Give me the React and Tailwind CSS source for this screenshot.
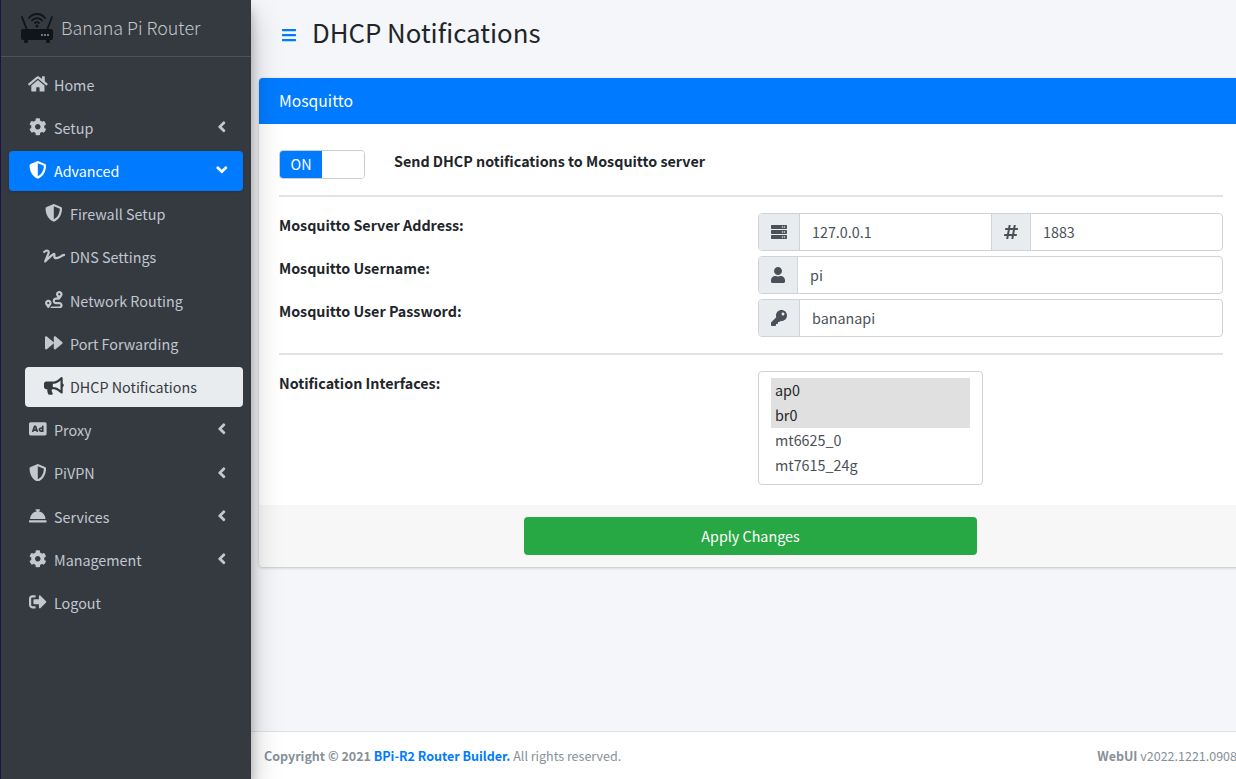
import React from "react";
import { FaHome, FaCog, FaShieldAlt, FaAngleLeft, FaAngleDown, FaSignature, FaRoute, FaForward, FaBullhorn, FaAd, FaConciergeBell, FaSignOutAlt, FaServer, FaHashtag, FaUser, FaKey, FaBars } from "react-icons/fa";

const Logo = () => (
  <svg width="34" height="31" viewBox="0 0 34 31" className="shrink-0">
    <g fill="none" stroke="#111418" strokeWidth="1.8" strokeLinecap="round">
      <path d="M9 5 A10 10 0 0 1 25 5" />
      <path d="M12 7.500 A6.400 6.400 0 0 1 22 7.500" />
      <path d="M15 10 A3 3 0 0 1 19 10" />
      <path d="M2 4 L7 17" />
      <path d="M32 4 L27 17" />
    </g>
    <circle cx="17" cy="13" r="1.500" fill="#111418" />
    <rect x="1" y="16" width="32" height="11" rx="2" fill="#111418" />
    <rect x="4" y="27" width="4" height="3" rx="1" fill="#111418" />
    <rect x="26" y="27" width="4" height="3" rx="1" fill="#111418" />
    <rect x="21" y="21" width="2" height="2" fill="#6c757d" />
    <rect x="24" y="21" width="2" height="2" fill="#6c757d" />
    <rect x="27" y="21" width="2" height="2" fill="#6c757d" />
  </svg>
);

const items = [
  { t: "Home", I: FaHome, s: 19.8 },
  { t: "Setup", I: FaCog, arrow: true },
  { t: "Advanced", I: FaShieldAlt, active: true, down: true },
  { t: "Firewall Setup", I: FaShieldAlt, sub: true },
  { t: "DNS Settings", I: FaSignature, sub: true, s: 22 },
  { t: "Network Routing", I: FaRoute, sub: true },
  { t: "Port Forwarding", I: FaForward, sub: true },
  { t: "DHCP Notifications", I: FaBullhorn, sub: true, current: true, s: 19.8 },
  { t: "Proxy", I: FaAd, arrow: true },
  { t: "PiVPN", I: FaShieldAlt, arrow: true },
  { t: "Services", I: FaConciergeBell, arrow: true },
  { t: "Management", I: FaCog, arrow: true },
  { t: "Logout", I: FaSignOutAlt },
];

function NavItem({ t, I, s = 17.6, arrow, down, active, sub, current }) {
  const color = active ? "bg-[#007bff] text-white shadow-sm" : current ? "bg-[#e9ecef] text-[#343a40]" : "text-[#c2c7d0]";
  const pos = sub ? "ml-[24px] pl-[17px]" : "ml-[8px] pl-[17px]";
  return (
    <div className={`mb-[3.2px] mr-[8px] flex h-10 items-center rounded pr-[12px] ${pos} ${color}`}>
      <span className="mr-[4px] flex w-[24px] shrink-0 -translate-y-[1px] justify-center">
        <I size={s} />
      </span>
      <span className="text-[14.33px] leading-6">{t}</span>
      {arrow && <FaAngleLeft size={17.6} className="ml-auto -translate-y-[1px]" />}
      {down && <FaAngleDown size={17.6} className="ml-auto -translate-y-[1px]" />}
    </div>
  );
}

function Addon({ I, w, s = 16 }) {
  return (
    <span className={`flex shrink-0 items-center justify-center self-stretch bg-[#e9ecef] text-[#495057] ${w}`}>
      <I size={s} />
    </span>
  );
}

const Val = ({ children, cls = "" }) => (
  <span className={`flex flex-1 items-center text-[14.33px] text-[#495057] ${cls}`}>{children}</span>
);

const Opt = ({ children, on }) => (
  <div className={`h-[25px] pl-[4px] ${on ? "bg-[#e0e0e0] text-[#212529]" : ""}`}>
    <span className="block -translate-y-[1px]">{children}</span>
  </div>
);

export default function App() {
  return (
    <div
      className="flex h-[779px] w-[1236px] overflow-hidden bg-[#f4f6f9] text-[#212529]"
      style={{ fontFamily: '"Noto Sans CJK JP", "Noto Sans", sans-serif' }}
    >
      <aside className="relative z-10 flex w-[251px] shrink-0 flex-col border-l border-[#1a1446] bg-[#343a40] shadow-[0_14px_28px_rgba(0,0,0,0.25),0_10px_10px_rgba(0,0,0,0.22)]">
        <div className="flex h-[57px] items-center border-b border-[#4b545c] pl-[19px]">
          <Logo />
          <span className="ml-[7px] text-[17.9px] font-light leading-none text-[rgba(255,255,255,0.72)]">Banana Pi Router</span>
        </div>
        <nav className="pt-[7.7px]">
          {items.map((it) => (
            <NavItem key={it.t} {...it} />
          ))}
        </nav>
      </aside>

      <main className="flex min-w-0 flex-1 flex-col">
        <div className="flex h-[78px] shrink-0 items-start pl-[30px] pt-[13px]">
          <FaBars size={16} className="mt-[14px] text-[#007bff]" />
          <h1 className="ml-[15px] whitespace-nowrap text-[25.8px] font-normal leading-[38px]">DHCP Notifications</h1>
        </div>

        <div className="ml-[8px] w-[984px] shrink-0 overflow-hidden rounded bg-white shadow-[0_0_1px_rgba(0,0,0,0.125),0_1px_3px_rgba(0,0,0,0.2)]">
          <div className="flex h-[46px] items-center bg-[#007bff] px-5 text-[15.7px] text-white">Mosquitto</div>

          <div className="px-5 pt-[26px]">
            <div className="flex h-[29px] items-center">
              <div className="flex h-[29px] w-[86px] overflow-hidden rounded border border-[#ccc]">
                <span className="flex w-[42px] items-center justify-center bg-[#007bff] text-[14.33px] text-white">
                  <span className="-translate-y-[1px]">ON</span>
                </span>
                <span className="flex-1 bg-white" />
              </div>
              <span className="ml-[29px] -translate-y-[4px] text-[14.3px] font-bold">Send DHCP notifications to Mosquitto server</span>
            </div>

            <hr className="mt-[16px] border-t-2 border-[#e3e3e3]" />

            <div className="mt-[16px] flex flex-col gap-[5px]">
              <div className="flex items-start justify-between">
                <span className="text-[14.3px] font-bold leading-6">Mosquitto Server Address:</span>
                <div className="flex h-[38px] w-[465px] overflow-hidden rounded border border-[#ced4da]">
                  <Addon I={FaServer} w="w-[41px] border-r border-[#ced4da]" />
                  <Val cls="pl-[12px] w-[191px] flex-none">127.0.0.1</Val>
                  <Addon I={FaHashtag} w="w-[40px] border-x border-[#ced4da]" />
                  <Val cls="pl-[12px]">1883</Val>
                </div>
              </div>
              <div className="flex items-start justify-between">
                <span className="text-[14.3px] font-bold leading-6">Mosquitto Username:</span>
                <div className="flex h-[38px] w-[465px] overflow-hidden rounded border border-[#ced4da]">
                  <Addon I={FaUser} w="w-[39px] border-r border-[#ced4da]" />
                  <Val cls="pl-[12px]">pi</Val>
                </div>
              </div>
              <div className="flex items-start justify-between">
                <span className="text-[14.3px] font-bold leading-6">Mosquitto User Password:</span>
                <div className="flex h-[38px] w-[465px] overflow-hidden rounded border border-[#ced4da]">
                  <Addon I={FaKey} w="w-[41px] border-r border-[#ced4da]" />
                  <Val cls="pl-[12px]">bananapi</Val>
                </div>
              </div>
            </div>

            <hr className="mt-[16px] border-t-2 border-[#e3e3e3]" />

            <div className="mt-[16px] flex items-start justify-between pb-[20px]">
              <span className="text-[14.3px] font-bold leading-6">Notification Interfaces:</span>
              <div className="w-[465px]">
                <div className="h-[114px] w-[225px] rounded border border-[#ced4da] px-[12px] pt-[6px] text-[14.33px] leading-[25px] text-[#495057]">
                  <Opt on>ap0</Opt>
                  <Opt on>br0</Opt>
                  <Opt>mt6625_0</Opt>
                  <Opt>mt7615_24g</Opt>
                </div>
              </div>
            </div>
          </div>

          <div className="flex h-[62px] items-center justify-center bg-[#f7f7f7] pr-[1px]">
            <div className="flex h-[38px] w-[453px] items-center justify-center rounded bg-[#28a745] text-[14.33px] text-white">Apply Changes</div>
          </div>
        </div>

        <div className="mt-auto flex h-[48px] shrink-0 items-center justify-between whitespace-nowrap border-t border-[#dee2e6] bg-white pl-[13px] text-[12.5px] text-[#869099]">
          <span className="translate-y-[1px]">
            <b>Copyright © 2021 <span className="text-[#007bff]">BPi-R2 Router Builder.</span></b> All rights reserved.
          </span>
          <span className="-mr-[1px] shrink-0 translate-y-[1px]"><b>WebUI</b> v2022.1221.0908</span>
        </div>
      </main>
    </div>
  );
}
